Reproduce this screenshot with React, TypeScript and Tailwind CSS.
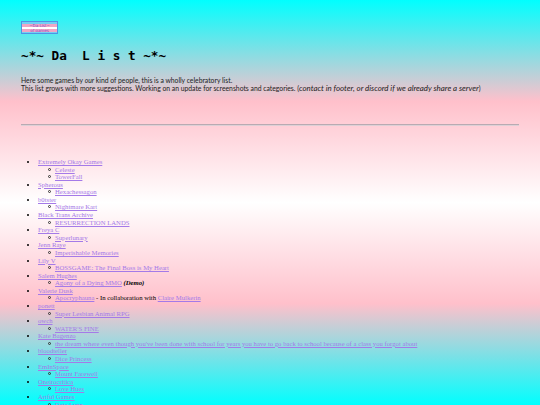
import React from "react";

type Game = { title: string; extra?: React.ReactNode };
type Dev = { name: string; games: Game[] };

const devs: Dev[] = [
  { name: "Extremely Okay Games", games: [{ title: "Celeste" }, { title: "TowerFall" }] },
  { name: "Spherous", games: [{ title: "Hexachessagon" }] },
  { name: "b0tster", games: [{ title: "Nightmare Kart" }] },
  { name: "Black Trans Archive", games: [{ title: "RESURRECTION LANDS" }] },
  { name: "Freya C", games: [{ title: "Superlunary" }] },
  { name: "Jenn Raye", games: [{ title: "Imperishable Memories" }] },
  { name: "Lily V", games: [{ title: "BOSSGAME: The Final Boss is My Heart" }] },
  {
    name: "Salem Hughes",
    games: [{ title: "Agony of a Dying MMO", extra: <> <i className="font-bold">(Demo)</i></> }],
  },
  {
    name: "Valerie Dusk",
    games: [
      {
        title: "Apocryphauna",
        extra: (
          <>
            {" "}- In collaboration with <a href="#" className="text-[#a47ae8] underline">Claire Mulkerin</a>
          </>
        ),
      },
    ],
  },
  { name: "ponett", games: [{ title: "Super Lesbian Animal RPG" }] },
  { name: "owch", games: [{ title: "WATER'S FINE" }] },
  {
    name: "Kate Bagenzo",
    games: [
      {
        title:
          "the dream where even though you've been done with school for years you have to go back to school because of a class you forgot about",
      },
    ],
  },
  { name: "bloodteller", games: [{ title: "Dice Princess" }] },
  { name: "EmInSpace", games: [{ title: "Mount Farewell" }] },
  { name: "Oneirocritica", games: [{ title: "Love Hues" }] },
  { name: "Artful Games", games: [{ title: "Date Lynn" }] },
];

function Logo() {
  return (
    <div className="w-[37px] h-[13px] border border-[#4f93e6] flex flex-col overflow-hidden">
      <div className="h-[2px] bg-[#6fd0f5]" />
      <div className="h-[3px] bg-[#f0a6c4] flex items-center justify-center text-[4px] leading-[3px] text-[#8a4fc8] font-['DejaVu_Sans',sans-serif]">
        ~Da List~
      </div>
      <div className="h-[2px] bg-white" />
      <div className="h-[3px] bg-[#f0a6c4] flex items-center justify-center text-[4px] leading-[3px] text-[#8a4fc8] font-['DejaVu_Sans',sans-serif]">
        of games
      </div>
      <div className="flex-1 bg-[#6fd0f5]" />
    </div>
  );
}

export default function App() {
  return (
    <div className="min-h-screen bg-fixed bg-[linear-gradient(#00ffff,#ffc0cb,#ffffff,#ffc0cb,#00ffff)] px-[21px] pt-[21px] pb-4 font-['Liberation_Serif',serif] text-black">
      <Logo />
      <h1 className="mt-[15px] text-[12.7px] leading-[13px] font-bold whitespace-pre font-['DejaVu_Sans_Mono',monospace]">
        {"~*~ Da  L i s t ~*~"}
      </h1>
      <p className="mt-[14px] text-[6.8px] leading-[8px] text-[#222] font-['Lato',sans-serif]">
        Here some games by <i>our</i> kind of people, this is a wholly celebratory list.
        <br />
        This list grows with more suggestions. Working on an update for screenshots and categories. (
        <i className="text-[7.9px]">contact in footer, or discord if we already share a server</i>)
      </p>
      <div className="mt-[32px] h-[2px] border-t border-[#b9aab2] bg-[#ddd0d6]" />
      <ul className="mt-[32px] list-disc pl-[17px] text-[6.7px] leading-[7.58px]">
        {devs.map((d) => (
          <li key={d.name}>
            <a href="#" className="text-[#a47ae8] underline">
              {d.name}
            </a>
            <ul className="list-none pl-[17px]">
              {d.games.map((g) => (
                <li key={g.title} className="whitespace-nowrap">
                  <span className="inline-block w-[3px] h-[3px] rounded-full border-[0.8px] border-[#333] -ml-[7px] mr-[4px] align-[1px]" />
                  <a href="#" className="text-[#a47ae8] underline">
                    {g.title}
                  </a>
                  {g.extra}
                </li>
              ))}
            </ul>
          </li>
        ))}
      </ul>
    </div>
  );
}
